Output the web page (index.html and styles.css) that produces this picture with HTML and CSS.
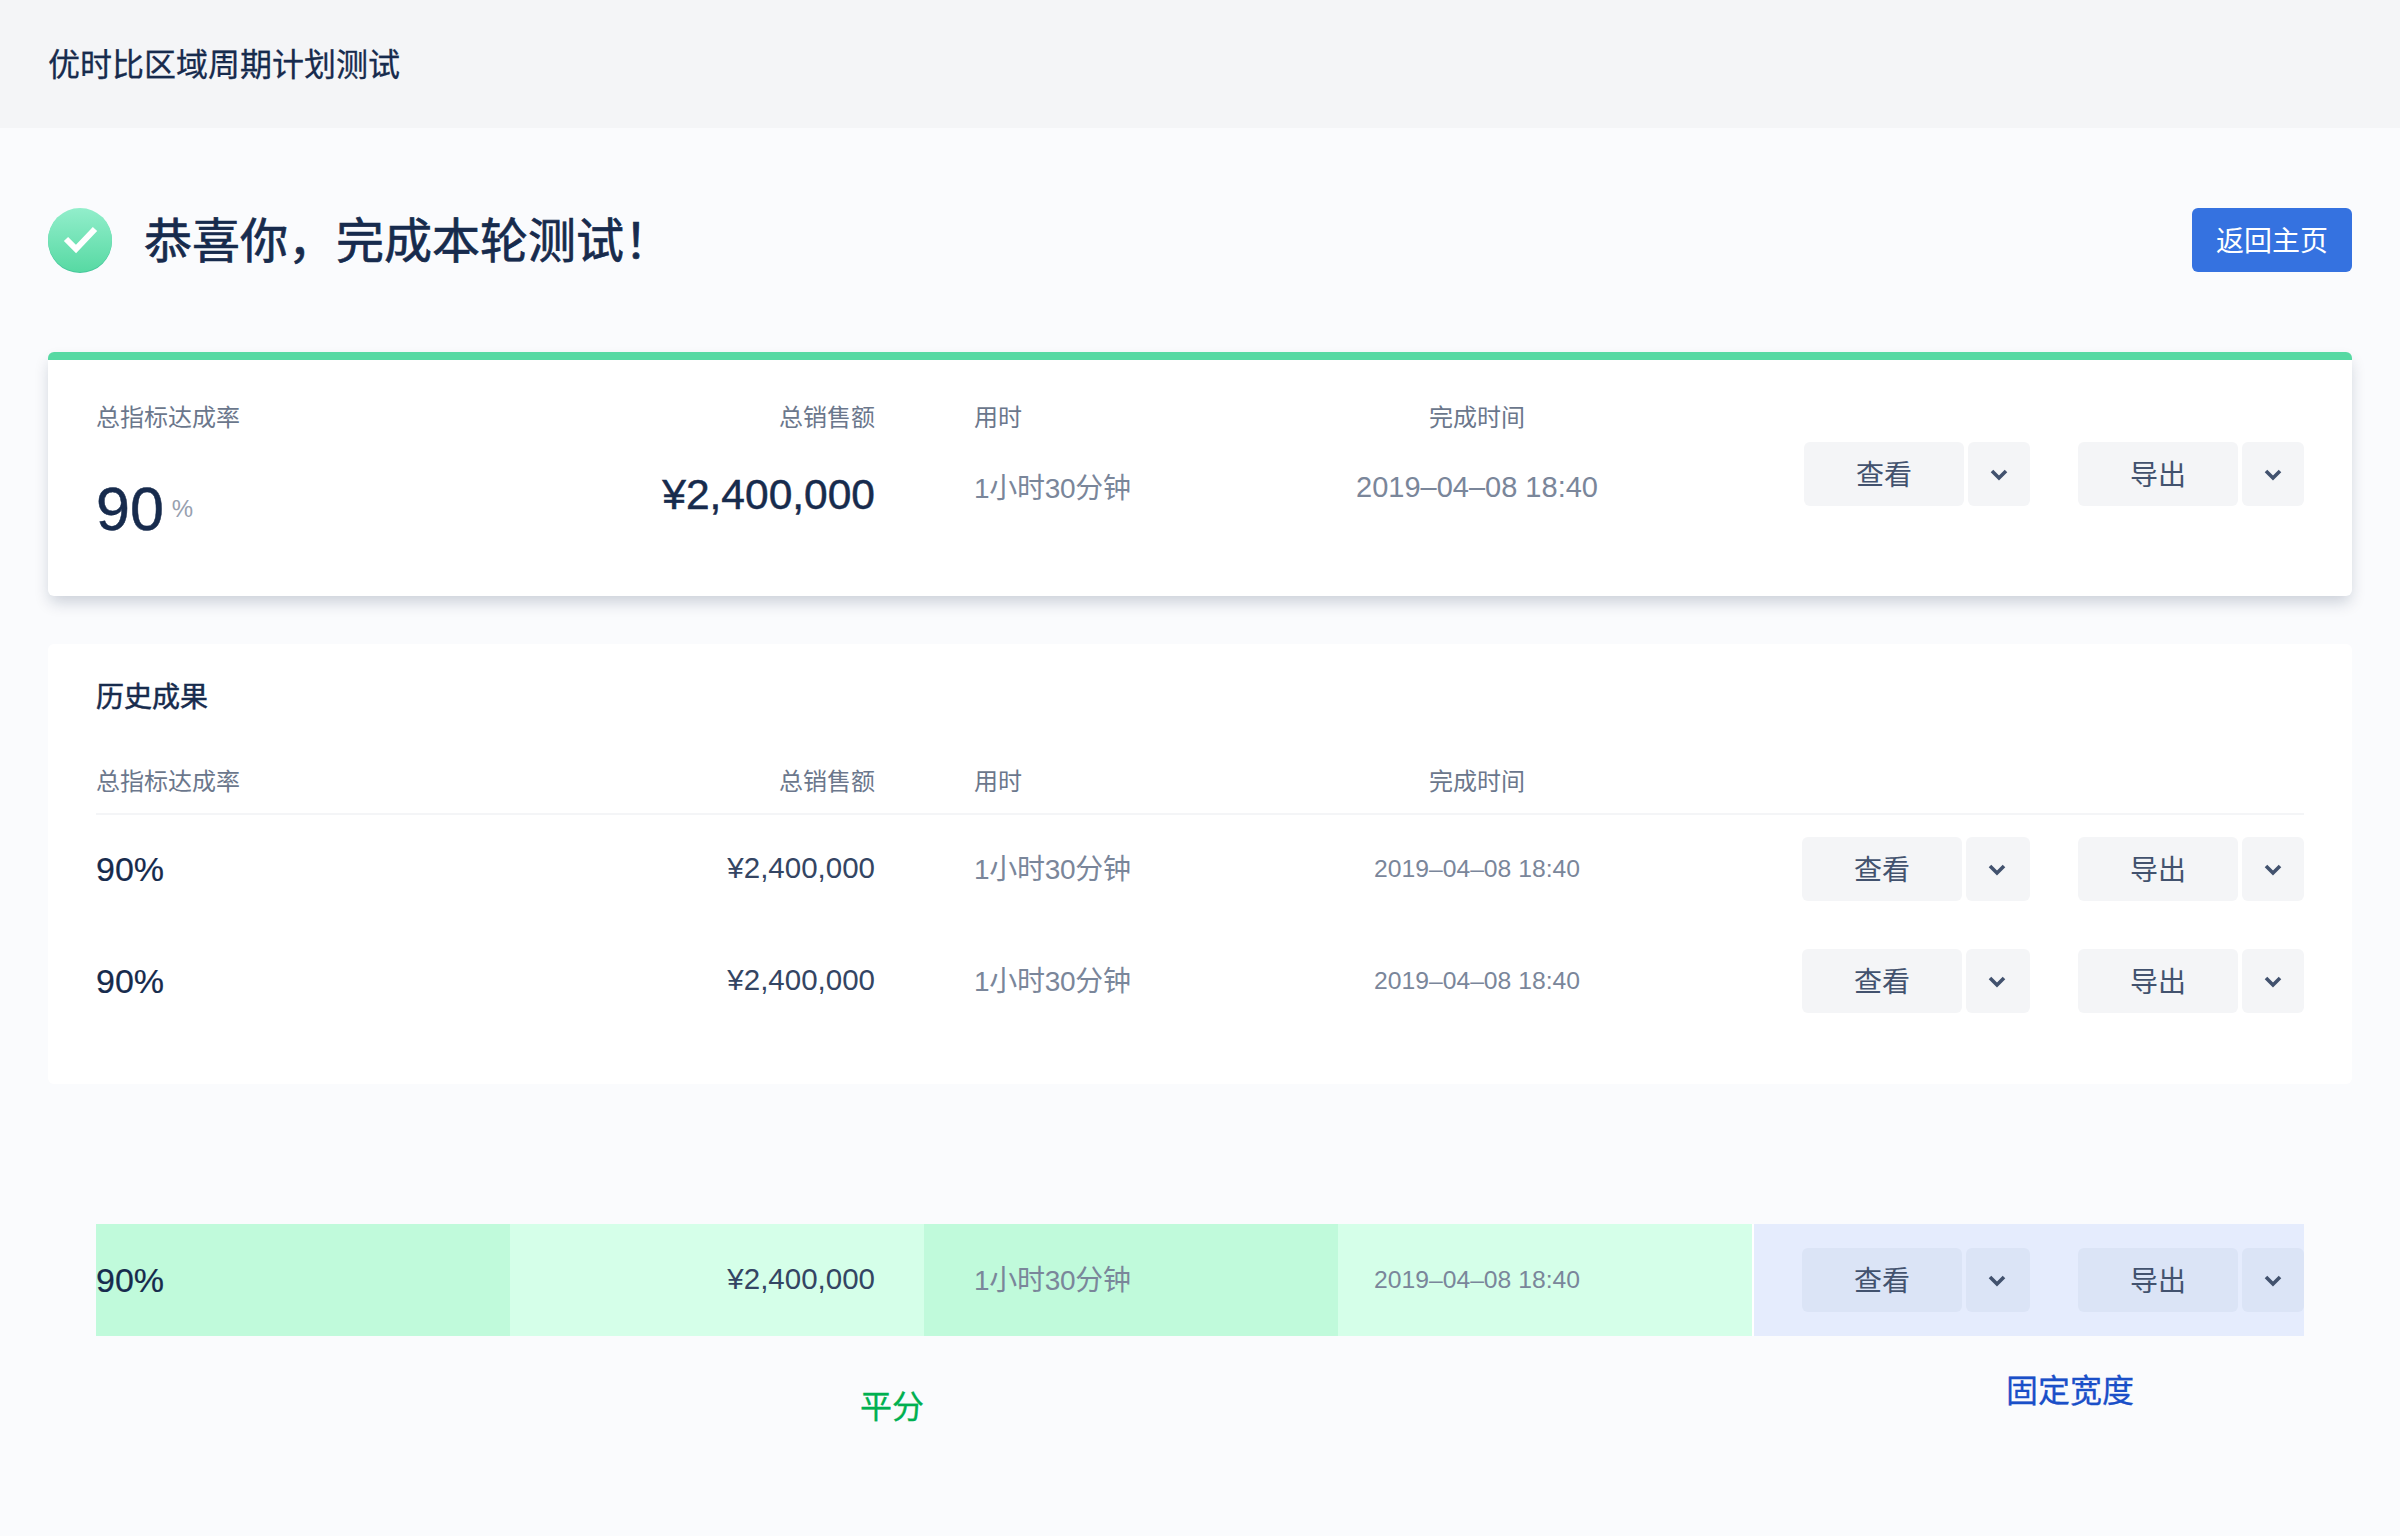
FILE: index.html
```html
<!DOCTYPE html>
<html lang="zh-CN">
<head>
    <meta charset="UTF-8">
    <meta name="viewport" content="width=device-width, initial-scale=1.0">
    <title>优时比区域周期计划测试</title>
    <link rel="stylesheet" href="styles.css">
</head>
<body>

<header class="topbar">优时比区域周期计划测试</header>

<main class="page">
    <section class="result-head">
        <div class="result-title">
            <svg class="check-icon" width="64" height="66" viewBox="0 0 64 66">
                <defs>
                    <linearGradient id="checkFill" x1="0" y1="0" x2="0" y2="1">
                        <stop offset="0" stop-color="#92eecb"/>
                        <stop offset="1" stop-color="#57d9a3"/>
                    </linearGradient>
                </defs>
                <circle cx="32" cy="33" r="32" fill="#45c79b"/>
                <circle cx="32" cy="32" r="32" fill="url(#checkFill)"/>
                <path d="M18 31L28 41L47 21" fill="none" stroke="#fff" stroke-width="6"/>
            </svg>
            <h1>恭喜你，完成本轮测试！</h1>
        </div>
        <button class="btn-primary">返回主页</button>
    </section>

    <section class="card card-current">
        <div class="grid labels">
            <div>总指标达成率</div>
            <div class="right">总销售额</div>
            <div class="left">用时</div>
            <div class="center">完成时间</div>
        </div>
        <div class="grid current-values">
            <div class="big-rate">90<span>%</span></div>
            <div class="right big-amount">¥2,400,000</div>
            <div class="left time big-time">1小时30分钟</div>
            <div class="center time big-date">2019–04–08 18:40</div>
            <div class="actions">
                <div class="btn-group"><button class="btn">查看</button><button class="btn drop"><svg width="18" height="12" viewBox="0 0 18 12"><path d="M2 2L9 9L16 2" fill="none" stroke="#42526e" stroke-width="3.6"/></svg></button></div>
                <div class="btn-group"><button class="btn">导出</button><button class="btn drop"><svg width="18" height="12" viewBox="0 0 18 12"><path d="M2 2L9 9L16 2" fill="none" stroke="#42526e" stroke-width="3.6"/></svg></button></div>
            </div>
        </div>
    </section>

    <section class="card card-history">
        <h2>历史成果</h2>
        <div class="grid labels history-labels">
            <div>总指标达成率</div>
            <div class="right">总销售额</div>
            <div class="left">用时</div>
            <div class="center">完成时间</div>
        </div>
        <div class="grid row">
            <div class="rate">90%</div>
            <div class="right amount">¥2,400,000</div>
            <div class="left time duration">1小时30分钟</div>
            <div class="center time date">2019–04–08 18:40</div>
            <div class="actions wide-first">
                <div class="btn-group"><button class="btn">查看</button><button class="btn drop"><svg width="18" height="12" viewBox="0 0 18 12"><path d="M2 2L9 9L16 2" fill="none" stroke="#42526e" stroke-width="3.6"/></svg></button></div>
                <div class="btn-group"><button class="btn">导出</button><button class="btn drop"><svg width="18" height="12" viewBox="0 0 18 12"><path d="M2 2L9 9L16 2" fill="none" stroke="#42526e" stroke-width="3.6"/></svg></button></div>
            </div>
        </div>
        <div class="grid row">
            <div class="rate">90%</div>
            <div class="right amount">¥2,400,000</div>
            <div class="left time duration">1小时30分钟</div>
            <div class="center time date">2019–04–08 18:40</div>
            <div class="actions wide-first">
                <div class="btn-group"><button class="btn">查看</button><button class="btn drop"><svg width="18" height="12" viewBox="0 0 18 12"><path d="M2 2L9 9L16 2" fill="none" stroke="#42526e" stroke-width="3.6"/></svg></button></div>
                <div class="btn-group"><button class="btn">导出</button><button class="btn drop"><svg width="18" height="12" viewBox="0 0 18 12"><path d="M2 2L9 9L16 2" fill="none" stroke="#42526e" stroke-width="3.6"/></svg></button></div>
            </div>
        </div>
    </section>

    <section class="demo">
        <div class="grid row demo-row">
            <div class="rate shade-dark">90%</div>
            <div class="right amount shade-light">¥2,400,000</div>
            <div class="left time duration shade-dark">1小时30分钟</div>
            <div class="center time date shade-light">2019–04–08 18:40</div>
            <div class="actions wide-first shade-blue">
                <div class="btn-group"><button class="btn">查看</button><button class="btn drop"><svg width="18" height="12" viewBox="0 0 18 12"><path d="M2 2L9 9L16 2" fill="none" stroke="#42526e" stroke-width="3.6"/></svg></button></div>
                <div class="btn-group"><button class="btn">导出</button><button class="btn drop"><svg width="18" height="12" viewBox="0 0 18 12"><path d="M2 2L9 9L16 2" fill="none" stroke="#42526e" stroke-width="3.6"/></svg></button></div>
            </div>
        </div>
        <div class="grid demo-notes">
            <div class="note-even">平分</div>
            <div class="note-fixed">固定宽度</div>
        </div>
    </section>
</main>

</body>
</html>
```

FILE: styles.css
```css
* {
    box-sizing: border-box;
}

body {
    margin: 0;
    min-height: 1536px;
    background-color: #fafbfd;
    color: #172b4d;
    font-family: "Liberation Sans", "Noto Sans CJK SC", sans-serif;
}

button {
    font-family: inherit;
    border: none;
    padding: 0;
}

.topbar {
    height: 128px;
    padding-left: 48px;
    background-color: #f4f5f7;
    font-size: 32px;
    line-height: 131px;
    -webkit-text-stroke: 0.3px #172b4d;
}

.page {
    padding: 80px 48px 0;
}

.result-head {
    display: flex;
    justify-content: space-between;
    align-items: flex-start;
}

.result-title {
    display: flex;
    align-items: flex-start;
    gap: 32px;
}

.result-title h1 {
    margin: 0;
    font-size: 48px;
    font-weight: 400;
    line-height: 67px;
    -webkit-text-stroke: 0.7px #172b4d;
}

.btn-primary {
    width: 160px;
    height: 64px;
    padding-bottom: 3px;
    background-color: #3572e0;
    border-radius: 6px;
    color: #fff;
    font-size: 28px;
}

.card {
    padding: 0 48px;
    background-color: #fff;
    border-radius: 6px;
}

.card-current {
    height: 244px;
    margin-top: 77px;
    padding-top: 46px;
    border-top: 8px solid #57d9a3;
    box-shadow: 0 8px 16px -2px rgba(9, 30, 66, 0.2);
}

.card-history {
    height: 440px;
    margin-top: 48px;
    padding-top: 32px;
}

.card-history h2 {
    margin: 0;
    font-size: 28px;
    font-weight: 400;
    line-height: 44px;
    -webkit-text-stroke: 0.5px #172b4d;
}

.grid {
    display: grid;
    grid-template-columns: repeat(4, 414px) 552px;
}

.labels {
    color: #6b778c;
    font-size: 24px;
    line-height: 24px;
}

.history-labels {
    height: 93px;
    padding-top: 50px;
    box-shadow: 0 2px 0 #f4f5f7;
}

.right {
    padding-right: 49px;
    text-align: right;
}

.left {
    padding-left: 50px;
}

.center {
    padding-right: 136px;
    text-align: center;
}

.time {
    color: #7a869a;
    font-size: 28px;
    letter-spacing: -0.3px;
}

.current-values {
    margin-top: 12px;
    height: 120px;
}

.big-rate {
    font-size: 61px;
    line-height: 133px;
    -webkit-text-stroke: 0.5px #172b4d;
}

.big-rate span {
    margin-left: 8px;
    color: #97a0af;
    font-size: 24px;
    vertical-align: 13px;
    -webkit-text-stroke: 0;
}

.big-amount {
    font-size: 42.5px;
    line-height: 105px;
    -webkit-text-stroke: 0.5px #172b4d;
}

.big-time {
    line-height: 93px;
}

.big-date {
    font-size: 29px;
    letter-spacing: 0;
    line-height: 91px;
}

.row {
    height: 112px;
    align-items: center;
}

.rate {
    font-size: 34px;
    -webkit-text-stroke: 0.2px #172b4d;
}

.amount {
    padding-bottom: 2px;
    color: #344563;
    font-size: 29.5px;
}

.duration {
    padding-bottom: 5px;
}

.date {
    font-size: 24.7px;
    letter-spacing: 0;
}

.actions {
    display: flex;
    justify-content: flex-end;
    gap: 48px;
}

.btn-group {
    display: flex;
    gap: 4px;
}

.btn {
    width: 160px;
    height: 64px;
    padding-bottom: 2px;
    background-color: #f4f5f7;
    border-radius: 6px;
    color: #42526e;
    font-size: 28px;
}

.drop {
    display: flex;
    width: 62px;
    padding: 2px 0 0;
    align-items: center;
    justify-content: center;
}

.wide-first .btn-group:first-child .drop {
    width: 64px;
    padding-right: 2px;
}

.demo {
    padding: 140px 48px 0;
}

.demo-row > div {
    display: flex;
    height: 112px;
    align-items: center;
}

.demo-row .right {
    justify-content: flex-end;
}

.demo-row .center {
    justify-content: center;
}

.demo-row .actions {
    justify-content: flex-end;
    border-left: 2px solid #fff;
}

.shade-dark {
    background-color: #c0fadb;
}

.shade-light {
    background-color: #d5ffe9;
}

.shade-blue {
    background-color: #e5ecfd;
}

.shade-blue .btn {
    background-color: #dbe4f6;
}

.demo-notes {
    font-size: 32px;
    line-height: 44px;
    -webkit-text-stroke: 0.3px;
}

.note-even {
    grid-column: 1 / 5;
    margin-top: 49px;
    padding-right: 64px;
    color: #00b050;
    text-align: center;
}

.note-fixed {
    margin-top: 33px;
    padding-left: 254px;
    color: #1a4fc8;
}
```
